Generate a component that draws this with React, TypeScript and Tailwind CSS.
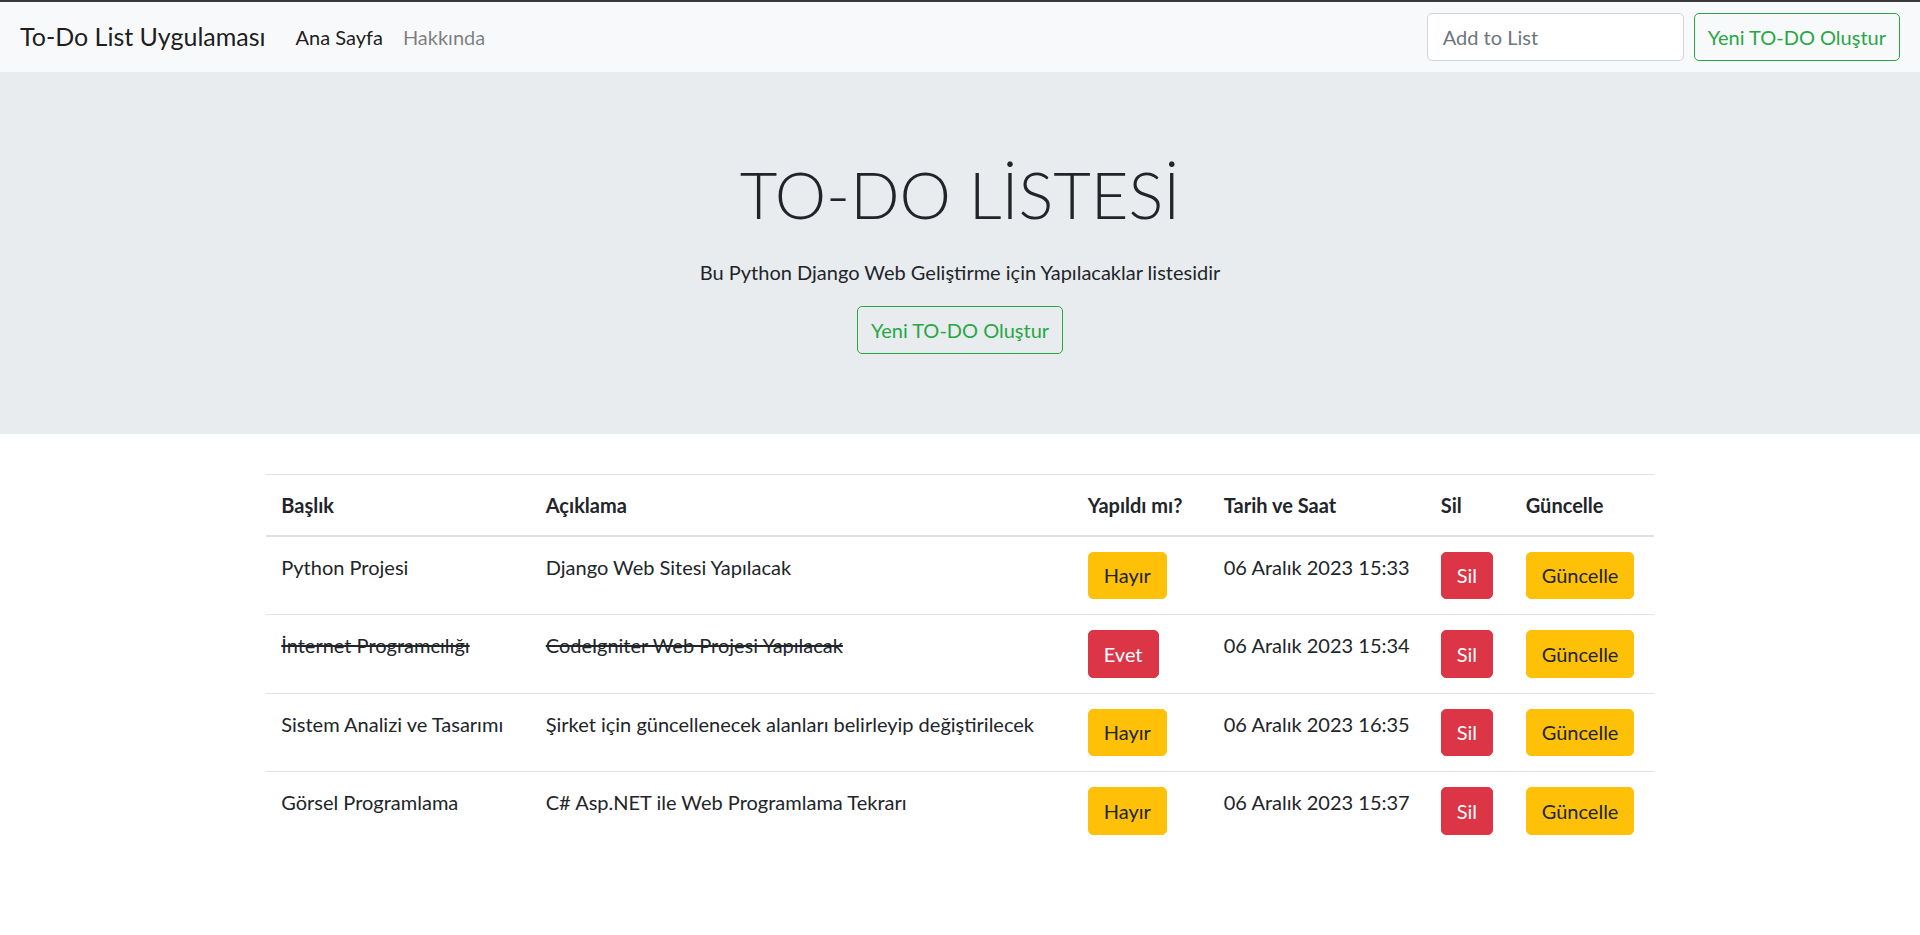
const todos = [
  { title: "Python Projesi", desc: "Django Web Sitesi Yapılacak", done: false, date: "06 Aralık 2023 15:33" },
  { title: "İnternet Programcılığı", desc: "CodeIgniter Web Projesi Yapılacak", done: true, date: "06 Aralık 2023 15:34" },
  { title: "Sistem Analizi ve Tasarımı", desc: "Şirket için güncellenecek alanları belirleyip değiştirilecek", done: false, date: "06 Aralık 2023 16:35" },
  { title: "Görsel Programlama", desc: "C# Asp.NET ile Web Programlama Tekrarı", done: false, date: "06 Aralık 2023 15:37" },
];

const btn = "inline-block whitespace-nowrap rounded-[5px] border py-[7.5px] text-[20px] leading-[30px] h-[47.5px]";

function Navbar() {
  return (
    <nav className="flex h-[72px] items-center border-t-2 border-[#3a3a3a] bg-[#f8f9fa] px-5">
      <a className="mr-5 text-[25px] leading-[37.5px] text-black/90">To-Do List Uygulaması</a>
      <ul className="flex">
        <li>
          <a className="px-[10px] text-black/90">Ana Sayfa</a>
        </li>
        <li>
          <a className="px-[10px] text-black/50">Hakkında</a>
        </li>
      </ul>
      <form className="ml-auto flex items-center gap-[10px]">
        <input
          type="text"
          placeholder="Add to List"
          className="h-[47.5px] w-[257px] rounded-[5px] border border-[#ced4da] bg-white px-[15px] text-[20px] text-[#495057] outline-none placeholder:text-[#6c757d]"
        />
        <button type="button" className={`${btn} border-[#28a745] px-[13px] text-[#28a745]`}>
          Yeni TO-DO Oluştur
        </button>
      </form>
    </nav>
  );
}

function Jumbotron() {
  return (
    <section className="mb-10 bg-[#e9ecef] px-10 py-20 text-center">
      <h1 className="mb-[21px] text-[65px] font-light leading-[84px]">TO-DO LİSTESİ</h1>
      <p className="mb-[19px]">Bu Python Django Web Geliştirme için Yapılacaklar listesidir</p>
      <a className={`${btn} border-[#28a745] px-[13px] text-[#28a745]`}>Yeni TO-DO Oluştur</a>
    </section>
  );
}

function TodoTable() {
  const th = "whitespace-nowrap border-b-2 border-t border-[#dee2e6] p-[15px] text-left align-bottom font-bold";
  const td = "whitespace-nowrap border-t border-[#dee2e6] p-[15px] align-top";
  const yellow = `${btn} border-[#ffc107] bg-[#ffc107] px-[15px] text-[#212529]`;
  const red = `${btn} border-[#dc3545] bg-[#dc3545] px-[15px] text-white`;
  return (
    <div className="mx-auto w-[1387.5px]">
      <table className="w-full table-fixed border-collapse">
        <colgroup>
          <col className="w-[264.5px]" />
          <col className="w-[542px]" />
          <col className="w-[136px]" />
          <col className="w-[217px]" />
          <col className="w-[85px]" />
          <col className="w-[143px]" />
        </colgroup>
        <thead>
          <tr>
            <th className={th}>Başlık</th>
            <th className={th}>Açıklama</th>
            <th className={th}>Yapıldı mı?</th>
            <th className={th}>Tarih ve Saat</th>
            <th className={th}>Sil</th>
            <th className={th}>Güncelle</th>
          </tr>
        </thead>
        <tbody>
          {todos.map((t, i) => (
            <tr key={i}>
              <td className={td}>{t.done ? <s>{t.title}</s> : t.title}</td>
              <td className={td}>{t.done ? <s>{t.desc}</s> : t.desc}</td>
              <td className={td}>
                {t.done ? <a className={red}>Evet</a> : <a className={yellow}>Hayır</a>}
              </td>
              <td className={td}>{t.date}</td>
              <td className={td}>
                <a className={red}>Sil</a>
              </td>
              <td className={td}>
                <a className={yellow}>Güncelle</a>
              </td>
            </tr>
          ))}
        </tbody>
      </table>
    </div>
  );
}

export default function App() {
  return (
    <div className="min-h-screen bg-white font-['Lato',sans-serif] text-[20px] leading-[30px] text-[#212529]">
      <Navbar />
      <Jumbotron />
      <TodoTable />
    </div>
  );
}
